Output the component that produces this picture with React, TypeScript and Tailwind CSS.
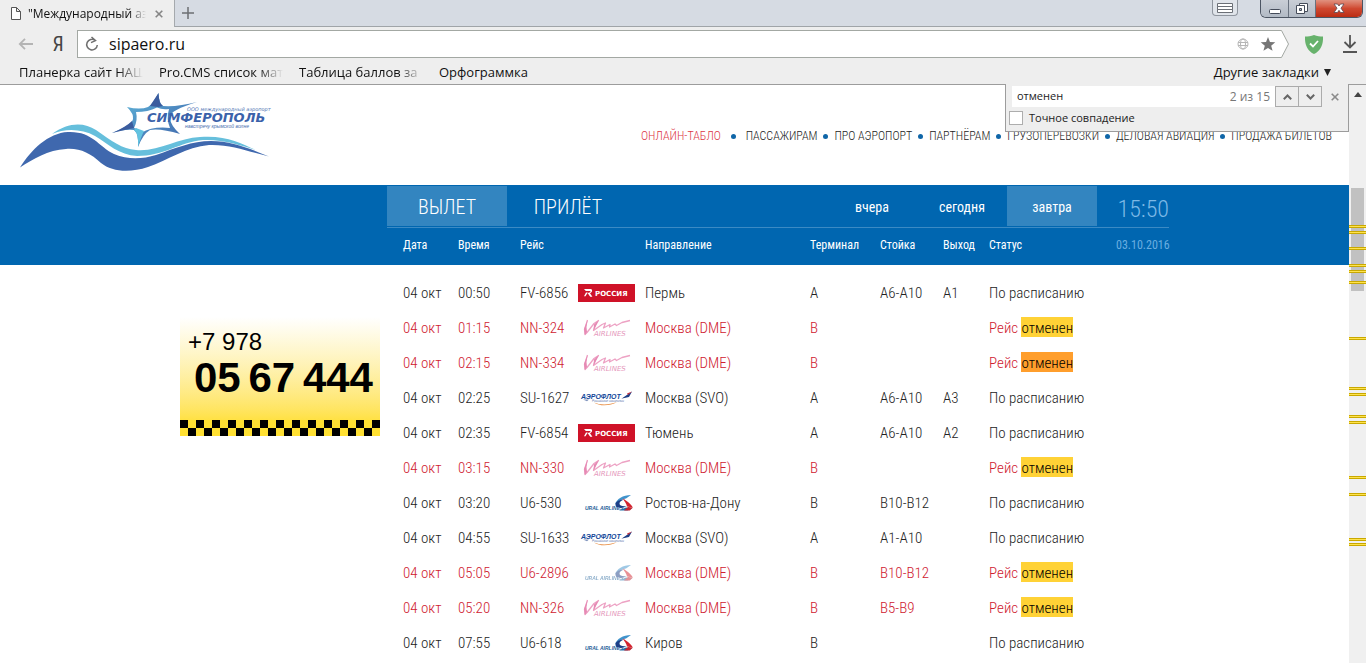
import React from "react";

type Airline = "rossiya" | "vim" | "aeroflot" | "ural";

interface Flight {
  time: string;
  code: string;
  airline: Airline;
  city: string;
  terminal: string;
  desk: string;
  gate: string;
  cancelled?: boolean;
  current?: boolean;
}

const flights: Flight[] = [
  { time: "00:50", code: "FV-6856", airline: "rossiya", city: "Пермь", terminal: "A", desk: "A6-A10", gate: "A1" },
  { time: "01:15", code: "NN-324", airline: "vim", city: "Москва (DME)", terminal: "B", desk: "", gate: "", cancelled: true },
  { time: "02:15", code: "NN-334", airline: "vim", city: "Москва (DME)", terminal: "B", desk: "", gate: "", cancelled: true, current: true },
  { time: "02:25", code: "SU-1627", airline: "aeroflot", city: "Москва (SVO)", terminal: "A", desk: "A6-A10", gate: "A3" },
  { time: "02:35", code: "FV-6854", airline: "rossiya", city: "Тюмень", terminal: "A", desk: "A6-A10", gate: "A2" },
  { time: "03:15", code: "NN-330", airline: "vim", city: "Москва (DME)", terminal: "B", desk: "", gate: "", cancelled: true },
  { time: "03:20", code: "U6-530", airline: "ural", city: "Ростов-на-Дону", terminal: "B", desk: "B10-B12", gate: "" },
  { time: "04:55", code: "SU-1633", airline: "aeroflot", city: "Москва (SVO)", terminal: "A", desk: "A1-A10", gate: "" },
  { time: "05:05", code: "U6-2896", airline: "ural", city: "Москва (DME)", terminal: "B", desk: "B10-B12", gate: "", cancelled: true },
  { time: "05:20", code: "NN-326", airline: "vim", city: "Москва (DME)", terminal: "B", desk: "B5-B9", gate: "", cancelled: true },
  { time: "07:55", code: "U6-618", airline: "ural", city: "Киров", terminal: "B", desk: "", gate: "" },
];

const menu = ["ОНЛАЙН-ТАБЛО", "ПАССАЖИРАМ", "ПРО АЭРОПОРТ", "ПАРТНЁРАМ", "ГРУЗОПЕРЕВОЗКИ", "ДЕЛОВАЯ АВИАЦИЯ", "ПРОДАЖА БИЛЕТОВ"];

const matchMarks = [140, 146, 162, 179, 185, 196, 252, 302, 308, 330, 336, 391, 408, 453, 458];

function AirlineLogo({ airline, faded }: { airline: Airline; faded?: boolean }) {
  const cls = faded ? "block h-[18px] w-[57px] opacity-50" : "block h-[18px] w-[57px]";
  if (airline === "rossiya") {
    return (
      <svg className={cls} viewBox="0 0 57 18" aria-label="Россия">
        <rect width="57" height="18" fill="#cf1228" />
        <path d="M6 5h6.500c1.600 0 2.300 1.900.9 3.200L12 9.200l2.400 3.600h-2.200L9.600 9l2-.6c1.300-.5 1.200-1.500.2-1.500H7.800zM8 8.500l1.800 0-2.300 3.700H6z" fill="#fff" />
        <text x="17" y="12" fontSize="7" fontWeight="700" fill="#fff" fontFamily="DejaVu Sans, sans-serif">РОССИЯ</text>
      </svg>
    );
  }
  if (airline === "vim") {
    return (
      <svg className="block h-[18px] w-[57px]" viewBox="0 0 57 18" aria-label="Vim Airlines">
        <path d="M9.500 1 6.500 10.500 7 15.500 9 13.500 16 4.500 20.500 1.500 17 7 15.500 11.500 24 5.500 27.500 4 25.500 9 32 5.500 31.500 8 37 5 38.500 6.500 44 3.500 52 1.500" fill="none" stroke="#eda2c4" strokeWidth="1.300" strokeLinejoin="round" />
        <path d="M9.500 1 6 10 7 16 9 13 8.500 8zM20.500 1.500 16 5.500 15.500 11.500 17.500 8z" fill="#e68ab4" />
        <text x="16" y="17" fontSize="7" fontStyle="italic" fill="#e597bb" fontFamily="DejaVu Sans, sans-serif">AIRLINES</text>
      </svg>
    );
  }
  if (airline === "aeroflot") {
    return (
      <svg className={cls} viewBox="0 0 57 18" aria-label="Аэрофлот">
        <text x="3" y="10" fontSize="7" fontWeight="700" fontStyle="italic" fill="#12489a" fontFamily="Liberation Sans, sans-serif">АЭРОФЛОТ</text>
        <path d="M43 10 54 2.500 51 8 44 9.500z" fill="#1c3f86" />
        <path d="M49 4.500 54 2.500 50 6z" fill="#c8313c" />
        <path d="M5 10.500h6l-2 1.800z" fill="#7e93bd" />
        <text x="14" y="13" fontSize="3" fontStyle="italic" fill="#5d78b0" fontFamily="Liberation Sans, sans-serif">Российские авиалинии</text>
        <path d="M16 13.500c6 2.600 15 2.600 23-.5-7 4-17 4.600-23 .5z" fill="#e88a3c" />
      </svg>
    );
  }
  return (
    <svg className={cls} viewBox="0 0 57 18" aria-label="Ural Airlines">
      <text x="7" y="16" fontSize="5" fontWeight="700" fontStyle="italic" fill="#1f6098" fontFamily="Liberation Sans, sans-serif">URAL AIRLINES</text>
      <path d="M53 1c-8 0-14.500 4-16 9.500 2.500-3.500 6.500-5.500 11-6z" fill="#3f93cc" />
      <path d="M37.500 10c-.5 4.500 6.500 5 11.500 2-4.500.6-7.500-.2-7.500-2.500 0-2 2.500-3.500 5.500-4-5-.2-9.300 1.800-9.500 4.500z" fill="#1c3f86" />
      <path d="M45 4.500c3 2 8 5 9.800 9L49 12.500c-.5-3.500-3-5-4-8z" fill="#d3232e" />
      <path d="M41 16.500 48 13.500l6.500 1-5 2z" fill="#2470a9" />
      <path d="M46 16.500 50 13l4.800.5-3 3z" fill="#c9232e" />
    </svg>
  );
}

function AirportLogo() {
  return (
    <svg className="block h-[78px] w-[252px]" viewBox="20 93 252 78" aria-label="Симферополь">
      <defs>
        <linearGradient id="star" x1="0" y1="0" x2="1" y2="1">
          <stop offset="0" stopColor="#66c3e0" />
          <stop offset=".45" stopColor="#4f8fc4" />
          <stop offset="1" stopColor="#3f5fa6" />
        </linearGradient>
      </defs>
      <path d="M52 134C68 122 84 122 96 130 112 141 122 149 136 150 158 152 178 138 200 137 226 135 240 143 256 150 240 145 222 139 203 140 180 142 164 156 137 156 119 155 108 144 95 136 82 129 66 128 52 134z" fill="#66bfdc" />
      <path d="M20 167.500C31 150 48 133 68 132 92 131 98 146 114 154 128 160 143 159 156 155 176 148 192 141 211 141 232 141 248 148 269 156.500 250 152 230 144 209 145 186 147 168 160 148 167 130 173 112 172 101 163 90 153 80 148 66 149 48 150 33 159 20 167.500z" fill="#3f68ae" />
      <path d="M158.500 93Q159 104 163 106 178 107 197 102 171 110 169 117 171 126 180 134 160 128 150 130 143 134 138 147 139 134 134 130 124 129 112 133 132 125 133 119 134 114 127 107 140 110 148 107 153 104 158.500 93zM157 107.500Q148 112 136 112 138 120 134 128 140 129 141 133 153 126 170 128 166 119 169 109 162 110 157 107.500z" fill="url(#star)" fillRule="evenodd" />
      <path d="M112 133Q126 127 132 121L134 128Q124 130 112 133zM158.500 93Q159 104 163 106L158 107 150 106z" fill="#3b5c9e" />
      <path d="M138 147Q139 134 134 130L136 128 144 131Q141 137 138 147z" fill="#62c3e0" />
      <text x="187" y="111" fontSize="5" fontStyle="italic" fill="#5278b5" fontFamily="DejaVu Sans, sans-serif">ООО международный аэропорт</text>
      <text x="147" y="122" fontSize="13" fontWeight="700" fontStyle="italic" fill="#3b62aa" fontFamily="DejaVu Sans, sans-serif">СИМФЕРОПОЛЬ</text>
      <text x="185" y="128" fontSize="5" fontStyle="italic" fill="#4a70b0" fontFamily="Liberation Sans, sans-serif">навстречу крымской волне</text>
    </svg>
  );
}

function WindowButtons() {
  return (
    <div className="flex items-start">
      <button aria-label="Меню" className="mr-[22px] flex h-4 w-[26px] items-center justify-center rounded-b border border-t-0 border-[#8f959e] bg-[#e0e4ea]">
        <svg className="h-3 w-4" viewBox="0 0 16 12" fill="#fff" stroke="#6b6f76"><path d="M.5 1.500h15v3H.5zM.5 4.500h15v3H.5zM.5 7.500h15v3H.5z" /></svg>
      </button>
      <div className="flex h-[18px] overflow-hidden rounded-b-md border border-t-0 border-[#4c5563]">
        <button aria-label="Свернуть" className="flex w-7 items-center justify-center border-r border-[#69727f] bg-linear-to-b from-[#c9ced6] to-[#b2bac5]">
          <svg className="h-4 w-4" viewBox="0 0 16 16"><rect x="2.500" y="8.500" width="11" height="4" rx="1" fill="#fff" stroke="#454c5a" /></svg>
        </button>
        <button aria-label="Развернуть" className="flex w-[27px] items-center justify-center border-r border-[#69727f] bg-linear-to-b from-[#c9ced6] to-[#b2bac5]">
          <svg className="h-4 w-4" viewBox="0 0 16 16" fill="#fff" stroke="#454c5a"><path d="M5.500 2.500h8v8h-8z" /><path d="M2.500 4.500h8v8h-8z" /><path d="M5.500 7.500h2v2h-2z" fill="#b2bac5" /></svg>
        </button>
        <button aria-label="Закрыть" className="flex w-[46px] items-center justify-center bg-linear-to-b from-[#e0917f] via-[#cf4830] to-[#bb2c12]">
          <svg className="h-4 w-4" viewBox="0 0 16 16"><path d="M3 3h3.500L8 5l1.500-2H13l-3 4.200 3 4.300H9.500L8 9.300l-1.500 2.200H3l3-4.300z" fill="#fff" stroke="#5c4650" strokeWidth=".8" /></svg>
        </button>
      </div>
    </div>
  );
}

function BrowserChrome() {
  return (
    <header className="border-b border-[#9c9c9c] bg-[#eeeeee] font-['Open_Sans','Noto_Sans',sans-serif] text-[#111]">
      <div className="flex h-[27px]">
        <div className="flex w-[175px] items-center border-r border-[#a5a9ad] pl-[10px]">
          <svg className="h-[15px] w-3 shrink-0" viewBox="0 0 12 15" fill="#fff" stroke="#555"><path d="M1.500 1.500h5l4 4v8h-9zM6.500 1.500v4h4" /></svg>
          <span className="ml-[6px] w-[118px] overflow-hidden text-xs whitespace-nowrap [mask-image:linear-gradient(to_right,#000_86%,transparent)]">"Международный аэр</span>
          <button aria-label="Закрыть вкладку" className="ml-[9px]">
            <svg className="h-2 w-2" viewBox="0 0 8 8" stroke="#858585" strokeWidth="1.600"><path d="M.7.7l6.600 6.600M7.300.7.7 7.300" /></svg>
          </button>
        </div>
        <div className="flex flex-1 justify-between border-b border-[#a0a4a8] bg-[#d6dbe3] pr-[3px] pl-[7px]">
          <button aria-label="Новая вкладка">
            <svg className="h-3 w-3" viewBox="0 0 12 12" stroke="#6c6f73" strokeWidth="1.500"><path d="M0 6h12M6 0v12" /></svg>
          </button>
          <WindowButtons />
        </div>
      </div>
      <div className="flex h-[34px] items-center pr-[9px] pl-[18px]">
        <button aria-label="Назад">
          <svg className="h-3 w-4" viewBox="0 0 16 12" fill="none" stroke="#b4b4b4" strokeWidth="1.800"><path d="M15 6H2M7 .8 1.800 6 7 11.200" /></svg>
        </button>
        <button className="ml-4 w-4 font-['Roboto_Condensed','Roboto',sans-serif] text-xl leading-6 text-[#444]">Я</button>
        <form className="relative ml-[11px] flex h-[28px] flex-1 items-center" onSubmit={(e) => e.preventDefault()}>
          <svg className="absolute top-0 right-0 h-[28px] w-5" viewBox="0 0 20 28" fill="#fff" stroke="#a3a8a3"><path d="M0 .5h12.500L19.500 14l-7 13.500H0" /></svg>
          <div className="mr-5 flex h-[28px] min-w-0 flex-1 items-center border border-r-0 border-[#a3a8a3] bg-white pl-[7px]">
            <button aria-label="Обновить">
              <svg className="h-4 w-[14px]" viewBox="0 0 14 16" fill="none" stroke="#6f6f6f" strokeWidth="1.500"><path d="M10 4.200A5.300 5.300 0 1 0 12.300 9M6.500 1l4 3.600-4.500 2" /></svg>
            </button>
            <input aria-label="Адрес" defaultValue="sipaero.ru" className="ml-[10px] min-w-0 flex-1 bg-transparent text-base leading-6 outline-none" />
            <svg className="h-3 w-3 shrink-0" viewBox="0 0 12 12" fill="none" stroke="#b5b5b5"><circle cx="6" cy="6" r="5" /><ellipse cx="6" cy="6" rx="2.500" ry="5" /><path d="M1 4.500h10M1 7.500h10" /></svg>
            <span className="w-5 shrink-0" />
          </div>
          <button aria-label="В закладки" className="absolute top-[7px] right-[13px]">
            <svg className="h-[14px] w-4" viewBox="0 0 16 15" fill="#767676"><path d="M8 0l2.100 5.300 5.700.4-4.400 3.600 1.500 5.500L8 11.800l-4.900 3 1.500-5.500L.2 5.700l5.700-.4z" /></svg>
          </button>
        </form>
        <svg className="ml-4 h-[19px] w-[18px]" viewBox="0 0 18 19" aria-label="Защита"><path d="M9 0c3 1.200 6 1.600 9 1.600.4 8-2.500 14-9 17.400C2.500 15.600-.4 9.600 0 1.600 3 1.600 6 1.200 9 0z" fill="#67b26c" /><path d="M5 8.500l3 3L13 6" fill="none" stroke="#fff" strokeWidth="1.800" /></svg>
        <button aria-label="Загрузки" className="ml-5">
          <svg className="h-[18px] w-[14px]" viewBox="0 0 14 18" fill="none" stroke="#555" strokeWidth="1.800"><path d="M7 0v12M1.500 7 7 12.500 12.500 7M0 17h14" /></svg>
        </button>
      </div>
      <nav className="flex h-[23px] items-center pr-[35px] pb-px pl-[19px] text-[13px] leading-5 whitespace-nowrap">
        <a href="#b1" className="mr-4 w-[124px] overflow-hidden [mask-image:linear-gradient(to_right,#000_80%,transparent)]">Планерка сайт НАШ</a>
        <a href="#b2" className="mr-4 w-[124px] overflow-hidden [mask-image:linear-gradient(to_right,#000_80%,transparent)]">Pro.CMS список мат</a>
        <a href="#b3" className="mr-4 w-[124px] overflow-hidden [mask-image:linear-gradient(to_right,#000_80%,transparent)]">Таблица баллов за</a>
        <a href="#b4">Орфограммка</a>
        <button className="ml-auto flex items-center gap-[5px]">
          Другие закладки
          <svg className="h-[7px] w-[7px]" viewBox="0 0 7 7" fill="#222"><path d="M0 0h7L3.500 7z" /></svg>
        </button>
      </nav>
    </header>
  );
}

function FindBar() {
  return (
    <form className="absolute -top-px right-0 w-[344px] border border-t-0 border-[#9c9c9c] bg-[#eeeeee] pt-[2px] pr-[9px] pb-[3px] pl-[3px] font-['Open_Sans','Noto_Sans',sans-serif] text-xs text-[#222]" onSubmit={(e) => e.preventDefault()}>
      <div className="flex h-[21px] items-stretch">
        <div className="ml-[3px] flex flex-1 items-center bg-white px-[5px]">
          <input aria-label="Найти" defaultValue="отменен" className="min-w-0 flex-1 bg-transparent text-[11px] outline-none" />
          <span className="text-[#777]">2 из 15</span>
        </div>
        <button aria-label="Предыдущее" className="flex w-6 items-center justify-center border border-[#ababab]">
          <svg className="h-[6px] w-[9px]" viewBox="0 0 9 6" fill="none" stroke="#666" strokeWidth="2"><path d="M.8 5.200 4.500 1.500l3.700 3.700" /></svg>
        </button>
        <button aria-label="Следующее" className="flex w-[23px] items-center justify-center border border-l-0 border-[#ababab]">
          <svg className="h-[6px] w-[9px]" viewBox="0 0 9 6" fill="none" stroke="#666" strokeWidth="2"><path d="M.8.8l3.700 3.700L8.200.8" /></svg>
        </button>
        <button aria-label="Закрыть поиск" className="ml-[9px]">
          <svg className="h-2 w-2" viewBox="0 0 8 8" stroke="#8a8a8a" strokeWidth="1.600"><path d="M.7.7l6.600 6.600M7.300.7.7 7.300" /></svg>
        </button>
      </div>
      <label className="mt-px flex h-[20px] items-center gap-[6px] text-[11px]">
        <input type="checkbox" className="h-[14px] w-[14px] appearance-none border border-[#adadad] bg-white" />
        Точное совпадение
      </label>
    </form>
  );
}

function TaxiAd() {
  return (
    <a href="#taxi" className="mt-[132px] block w-[200px] bg-linear-to-b from-white to-[#ffe033] to-90% font-['Liberation_Sans',sans-serif] text-black">
      <span className="block pt-3 pl-2 text-2xl leading-[26px]">+7 978</span>
      <span className="flex justify-between pr-[7px] pb-[15px] pl-[14px] text-[42px] leading-[46px] font-bold">
        <span>05</span>
        <span>67</span>
        <span>444</span>
      </span>
      <span className="mt-[4px] block h-4 bg-[conic-gradient(#ffe033_25%,#000_0_50%,#ffe033_0_75%,#000_0)] bg-[length:16px_16px]" />
    </a>
  );
}

function Board() {
  return (
    <section className="bg-[linear-gradient(#0066b0_80px,#fff_80px)]">
      <div className="mx-auto flex w-full max-w-[989px]">
        <aside className="w-[207px] shrink-0">
          <TaxiAd />
        </aside>
        <div className="min-w-0 flex-1">
          <nav className="flex h-[43px] items-stretch border-b border-[#3b8ac4] pt-px text-white">
            <button className="mb-px w-[120px] bg-[#3385c0] pt-[2px] text-xl font-light">ВЫЛЕТ</button>
            <button className="mb-px w-[122px] pt-[2px] text-xl font-light">ПРИЛЁТ</button>
            <div className="mb-px ml-auto flex">
              <button className="w-[90px] pt-[2px] text-sm">вчера</button>
              <button className="w-[90px] pt-[2px] text-sm">сегодня</button>
              <button className="w-[90px] bg-[#3385c0] pt-[2px] text-sm">завтра</button>
            </div>
            <time className="w-[72px] self-center pt-1 text-right text-2xl font-light text-[#7db9e6]">15:50</time>
          </nav>
          <table className="w-full table-fixed border-collapse text-left text-[15px] font-light whitespace-nowrap text-[#222]">
            <colgroup>
              <col className="w-[71px]" />
              <col className="w-[62px]" />
              <col className="w-[58px]" />
              <col className="w-[67px]" />
              <col className="w-[165px]" />
              <col className="w-[70px]" />
              <col className="w-[63px]" />
              <col className="w-[46px]" />
              <col />
              <col className="w-[53px]" />
            </colgroup>
            <thead>
              <tr className="h-[37px] text-xs text-white *:pb-1 *:font-normal">
                <th className="pl-4">Дата</th>
                <th>Время</th>
                <th colSpan={2}>Рейс</th>
                <th>Направление</th>
                <th>Терминал</th>
                <th>Стойка</th>
                <th>Выход</th>
                <th>Статус</th>
                <th className="text-right text-[#6aaee0]">03.10.2016</th>
              </tr>
            </thead>
            <tbody className="before:block before:h-[11px] before:content-['']">
              {flights.map((f) => (
                <tr key={f.code} className={f.cancelled ? "h-[35px] text-[#cf2030]" : "h-[35px]"}>
                  <td className="pl-4">04 окт</td>
                  <td>{f.time}</td>
                  <td>{f.code}</td>
                  <td className="pb-[2px]"><AirlineLogo airline={f.airline} faded={f.cancelled} /></td>
                  <td>{f.city}</td>
                  <td>{f.terminal}</td>
                  <td>{f.desk}</td>
                  <td>{f.gate}</td>
                  <td colSpan={2}>
                    {f.cancelled ? (
                      <>Рейс <mark className={f.current ? "bg-[#ff9e2c] pt-[2px] text-black" : "bg-[#ffd236] pt-[2px] text-black"}>отменен</mark></>
                    ) : (
                      "По расписанию"
                    )}
                  </td>
                </tr>
              ))}
            </tbody>
          </table>
        </div>
      </div>
    </section>
  );
}

function Scrollbar() {
  return (
    <div className="relative w-[17px] shrink-0 bg-[#f0f0f0]">
      <svg className="mx-auto mt-[7px] h-[5px] w-2" viewBox="0 0 8 5" fill="#444"><path d="M0 5 4 0l4 5z" /></svg>
      <div className="mx-auto mt-[91px] h-[103px] w-[13px] bg-[#c1c1c1]" />
      {matchMarks.map((y) => (
        <i key={y} className="absolute left-0 block h-[3px] w-full border-y border-[#c9a800] bg-[#ffe34d]" style={{ top: y }} />
      ))}
    </div>
  );
}

export default function App() {
  return (
    <div className="flex min-h-screen flex-col bg-white">
      <BrowserChrome />
      <div className="flex flex-1">
        <main className="relative min-w-0 flex-1 bg-white font-['Roboto_Condensed','Roboto',sans-serif]">
          <div className="flex h-[100px] items-start justify-between pt-2 pr-[17px] pl-5">
            <AirportLogo />
            <nav className="mt-[35px] flex w-[691px] items-center justify-between text-xs leading-4 font-light whitespace-nowrap text-[#222]">
              {menu.map((m, i) => (
                <React.Fragment key={m}>
                  {i > 0 && <span className={i === 1 ? "mr-1 h-[5px] w-[5px] rounded-full bg-[#0f66a8]" : "h-[5px] w-[5px] rounded-full bg-[#0f66a8]"} />}
                  <a href={"#m" + i} className={i === 0 ? "pr-1 text-[#dc3545]" : ""}>{m}</a>
                </React.Fragment>
              ))}
            </nav>
          </div>
          <Board />
          <FindBar />
        </main>
        <Scrollbar />
      </div>
    </div>
  );
}
